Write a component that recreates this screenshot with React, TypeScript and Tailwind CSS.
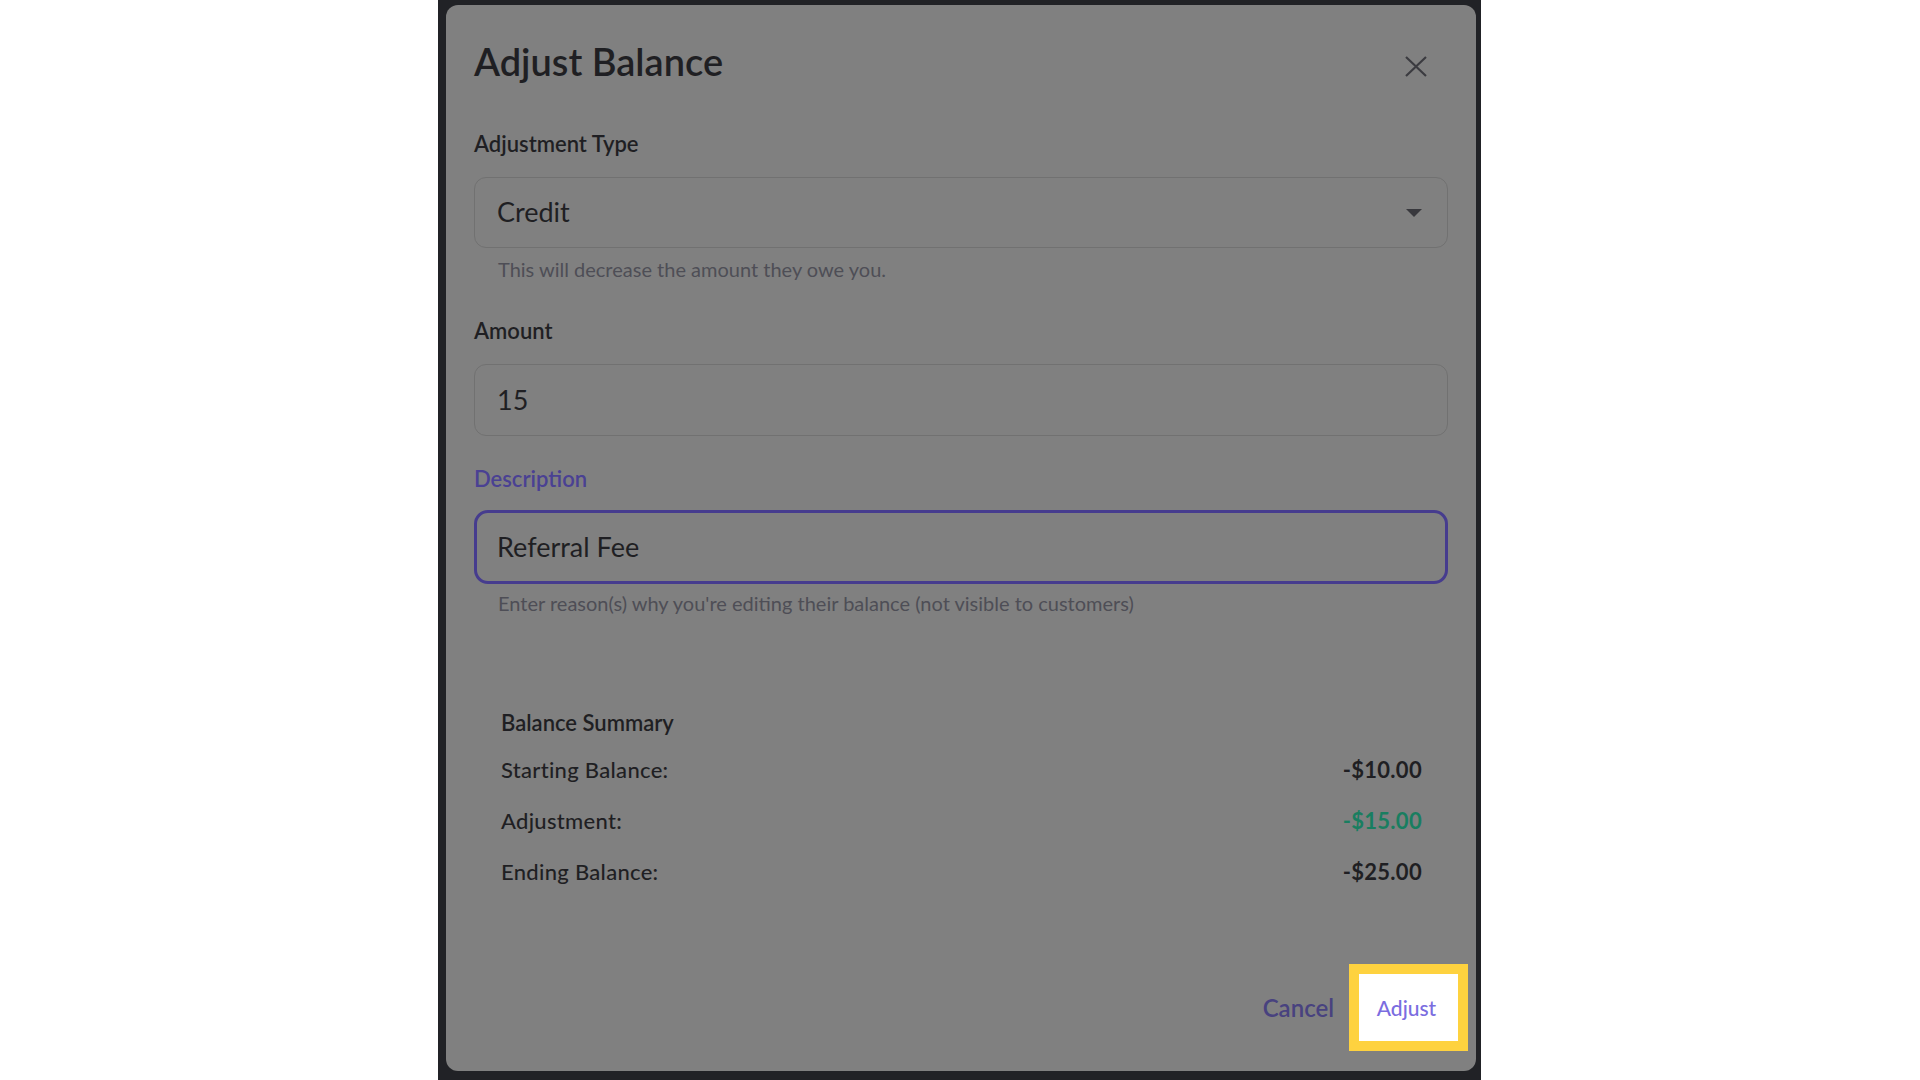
import React from "react";

export default function App() {
  return (
    <div className="h-[1080px] w-full overflow-hidden bg-white font-[Lato,sans-serif]">
      <div className="ml-[438px] h-full w-[1043px] bg-[#212226] pl-[8px] pr-[5px] pt-[5px]">
        <AdjustBalanceModal />
      </div>
    </div>
  );
}

const AdjustBalanceModal = () => (
  <div className="flex h-[1066px] w-[1030px] flex-col rounded-[12px] bg-[#808080] text-[#1f1f23]">
    <div className="px-[28px] pt-[33px]">
      <div className="flex items-start justify-between">
        <h2 className="text-[38px] font-semibold leading-[46px]">Adjust Balance</h2>
        <button className="mr-[21px] mt-[18px] text-[#3b3b40]">
          <svg width="22" height="21" viewBox="0 0 22 21" fill="none">
            <path d="M1 1L21 20M21 1L1 20" stroke="currentColor" strokeWidth="2.2" />
          </svg>
        </button>
      </div>

      <Label className="mt-[48px]">Adjustment Type</Label>
      <div className="mt-[21px] flex h-[71px] items-center justify-between rounded-[12px] border border-[#717171] pl-[22px] pr-[25px] text-[27px]">
        <span>Credit</span>
        <svg width="16" height="8" viewBox="0 0 16 8">
          <polygon points="0,0 16,0 8,8" fill="#38383d" />
        </svg>
      </div>
      <Helper>This will decrease the amount they owe you.</Helper>

      <Label className="mt-[39px]">Amount</Label>
      <div className="mt-[21px] flex h-[72px] items-center rounded-[12px] border border-[#717171] pl-[22px] text-[27px]">
        15
      </div>

      <Label className="mt-[31px] text-[#4a4193]">Description</Label>
      <div className="mt-[19px] flex h-[74px] items-center rounded-[14px] border-[3px] border-[#463c8e] pl-[20px] text-[27px]">
        Referral Fee
      </div>
      <Helper className="mt-[8px]">
        Enter reason(s) why you're editing their balance (not visible to customers)
      </Helper>

      <div className="mt-[97px] pl-[27px] pr-[26px]">
        <h3 className="text-[22px] font-semibold leading-[24px]">Balance Summary</h3>
        <div className="mt-[23px] flex flex-col gap-[27px]">
          <SummaryRow label="Starting Balance:" value="-$10.00" />
          <SummaryRow label="Adjustment:" value="-$15.00" valueClass="text-[#197e60]" />
          <SummaryRow label="Ending Balance:" value="-$25.00" />
        </div>
      </div>
    </div>

    <div className="mt-auto flex items-center justify-end gap-[13px] pb-[30px] pr-[18px]">
      <button className="px-[12px] text-[24px] font-semibold text-[#48427f]">Cancel</button>
      <button className="flex h-[67px] w-[99px] items-center justify-center bg-white pr-[4px] text-[21px] font-medium text-[#7b6de0] ring-[10px] ring-[#fed23f]">
        Adjust
      </button>
    </div>
  </div>
);

const Label = ({ children, className = "" }: { children: React.ReactNode; className?: string }) => (
  <div className={`text-[22px] font-semibold leading-[24px] ${className}`}>{children}</div>
);

const Helper = ({ children, className = "mt-[10px]" }: { children: React.ReactNode; className?: string }) => (
  <p className={`pl-[24px] text-[20px] leading-[22px] text-[#4e4e56] ${className}`}>{children}</p>
);

const SummaryRow = ({
  label,
  value,
  valueClass = "",
}: {
  label: string;
  value: string;
  valueClass?: string;
}) => (
  <div className="flex items-center justify-between text-[22px] leading-[24px] tracking-[0.3px]">
    <span className="font-medium">{label}</span>
    <span className={`font-bold ${valueClass}`}>{value}</span>
  </div>
);
